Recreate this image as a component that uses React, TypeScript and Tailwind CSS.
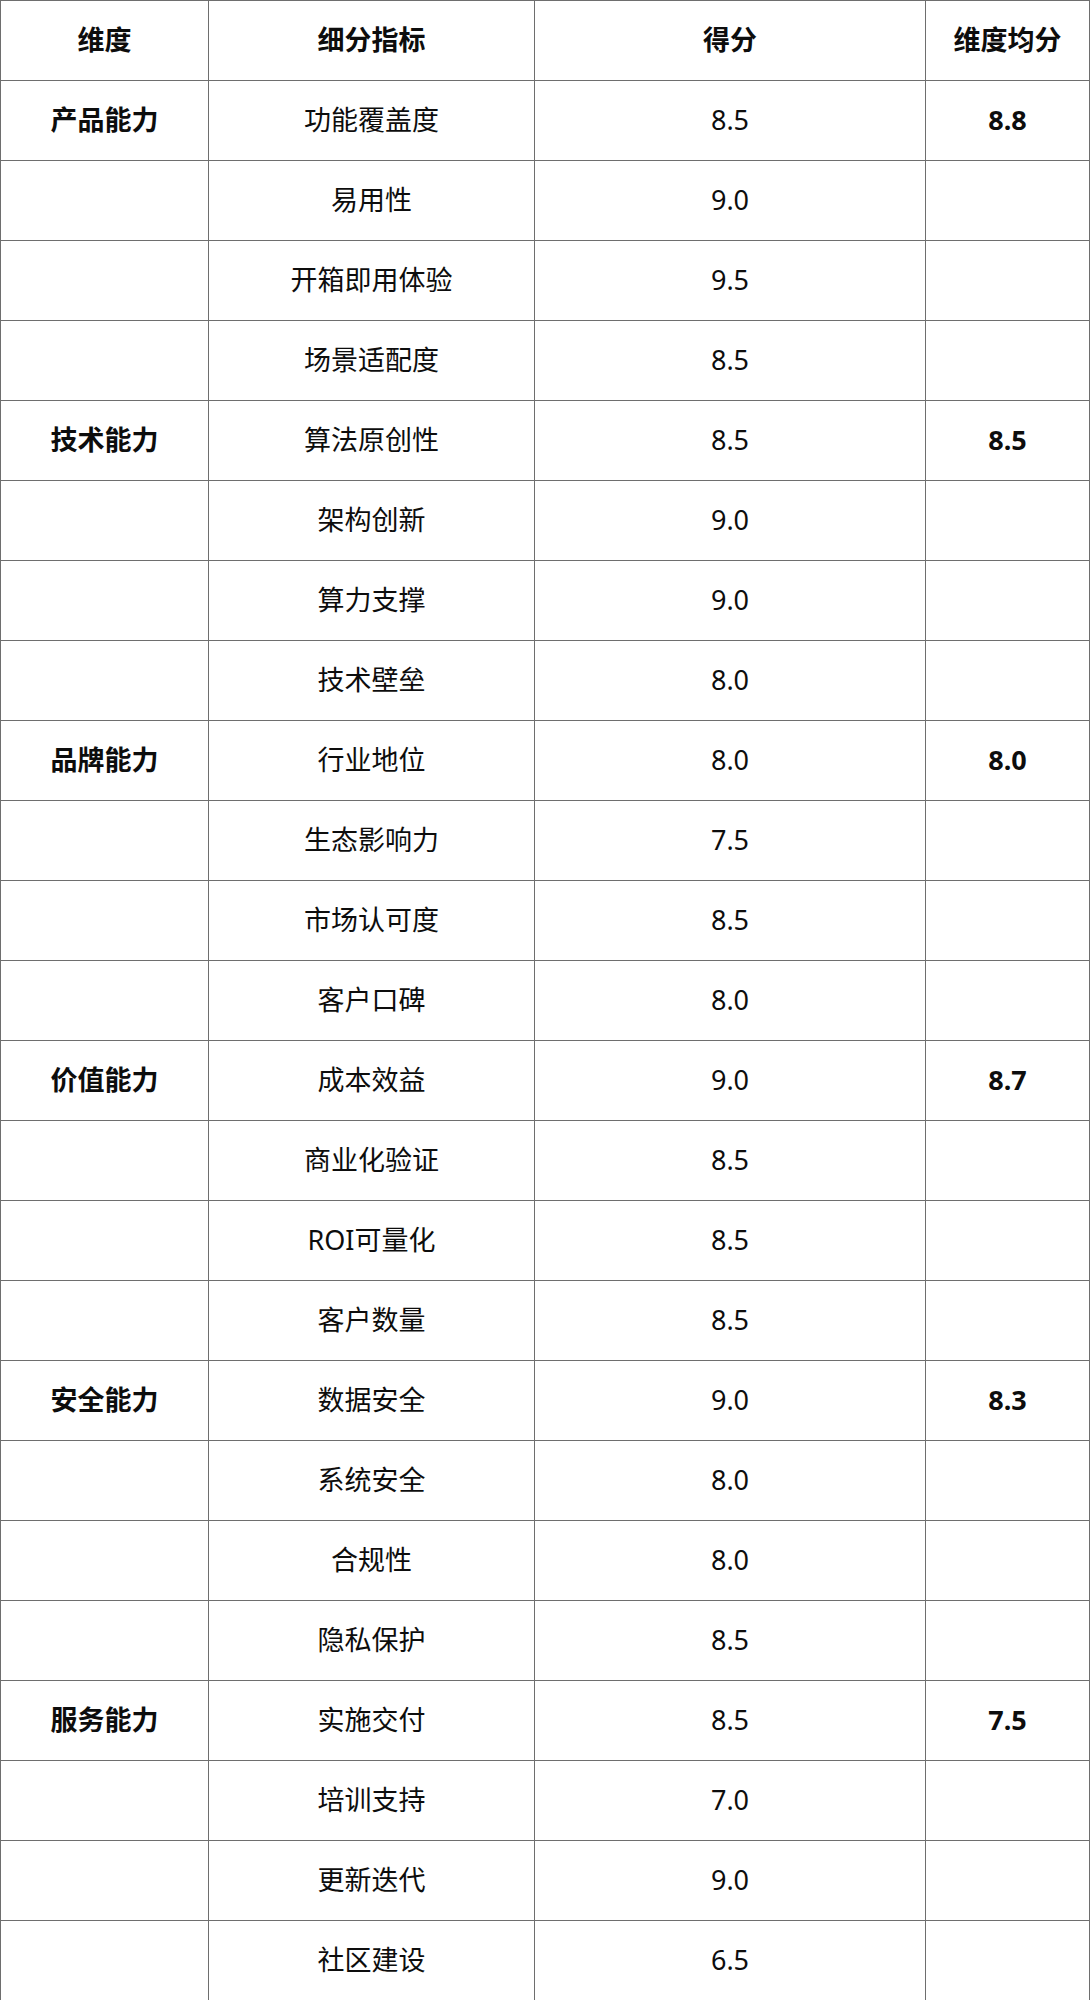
const rows: [string, string, string, string][] = [
  ["产品能力", "功能覆盖度", "8.5", "8.8"],
  ["", "易用性", "9.0", ""],
  ["", "开箱即用体验", "9.5", ""],
  ["", "场景适配度", "8.5", ""],
  ["技术能力", "算法原创性", "8.5", "8.5"],
  ["", "架构创新", "9.0", ""],
  ["", "算力支撑", "9.0", ""],
  ["", "技术壁垒", "8.0", ""],
  ["品牌能力", "行业地位", "8.0", "8.0"],
  ["", "生态影响力", "7.5", ""],
  ["", "市场认可度", "8.5", ""],
  ["", "客户口碑", "8.0", ""],
  ["价值能力", "成本效益", "9.0", "8.7"],
  ["", "商业化验证", "8.5", ""],
  ["", "ROI可量化", "8.5", ""],
  ["", "客户数量", "8.5", ""],
  ["安全能力", "数据安全", "9.0", "8.3"],
  ["", "系统安全", "8.0", ""],
  ["", "合规性", "8.0", ""],
  ["", "隐私保护", "8.5", ""],
  ["服务能力", "实施交付", "8.5", "7.5"],
  ["", "培训支持", "7.0", ""],
  ["", "更新迭代", "9.0", ""],
  ["", "社区建设", "6.5", ""],
];

const cell = "border border-[#6e6e6e] text-center align-middle p-0";

export default function App() {
  return (
    <div className="w-[1090px] bg-white text-[#0d0d0d] font-['Noto_Sans','Noto_Sans_CJK_SC',sans-serif] text-[27px]">
      <table className="w-full table-fixed border-collapse">
        <colgroup>
          <col className="w-[208px]" />
          <col className="w-[326px]" />
          <col className="w-[391px]" />
          <col />
        </colgroup>
        <thead>
          <tr className="h-[80px] font-bold">
            <th className={cell}>维度</th>
            <th className={cell}>细分指标</th>
            <th className={cell}>得分</th>
            <th className={cell}>维度均分</th>
          </tr>
        </thead>
        <tbody>
          {rows.map((r, i) => (
            <tr key={i} className="h-[80px]">
              <td className={cell + " font-bold"}>{r[0]}</td>
              <td className={cell}>{r[1]}</td>
              <td className={cell}>{r[2]}</td>
              <td className={cell + " font-bold"}>{r[3]}</td>
            </tr>
          ))}
        </tbody>
      </table>
    </div>
  );
}
